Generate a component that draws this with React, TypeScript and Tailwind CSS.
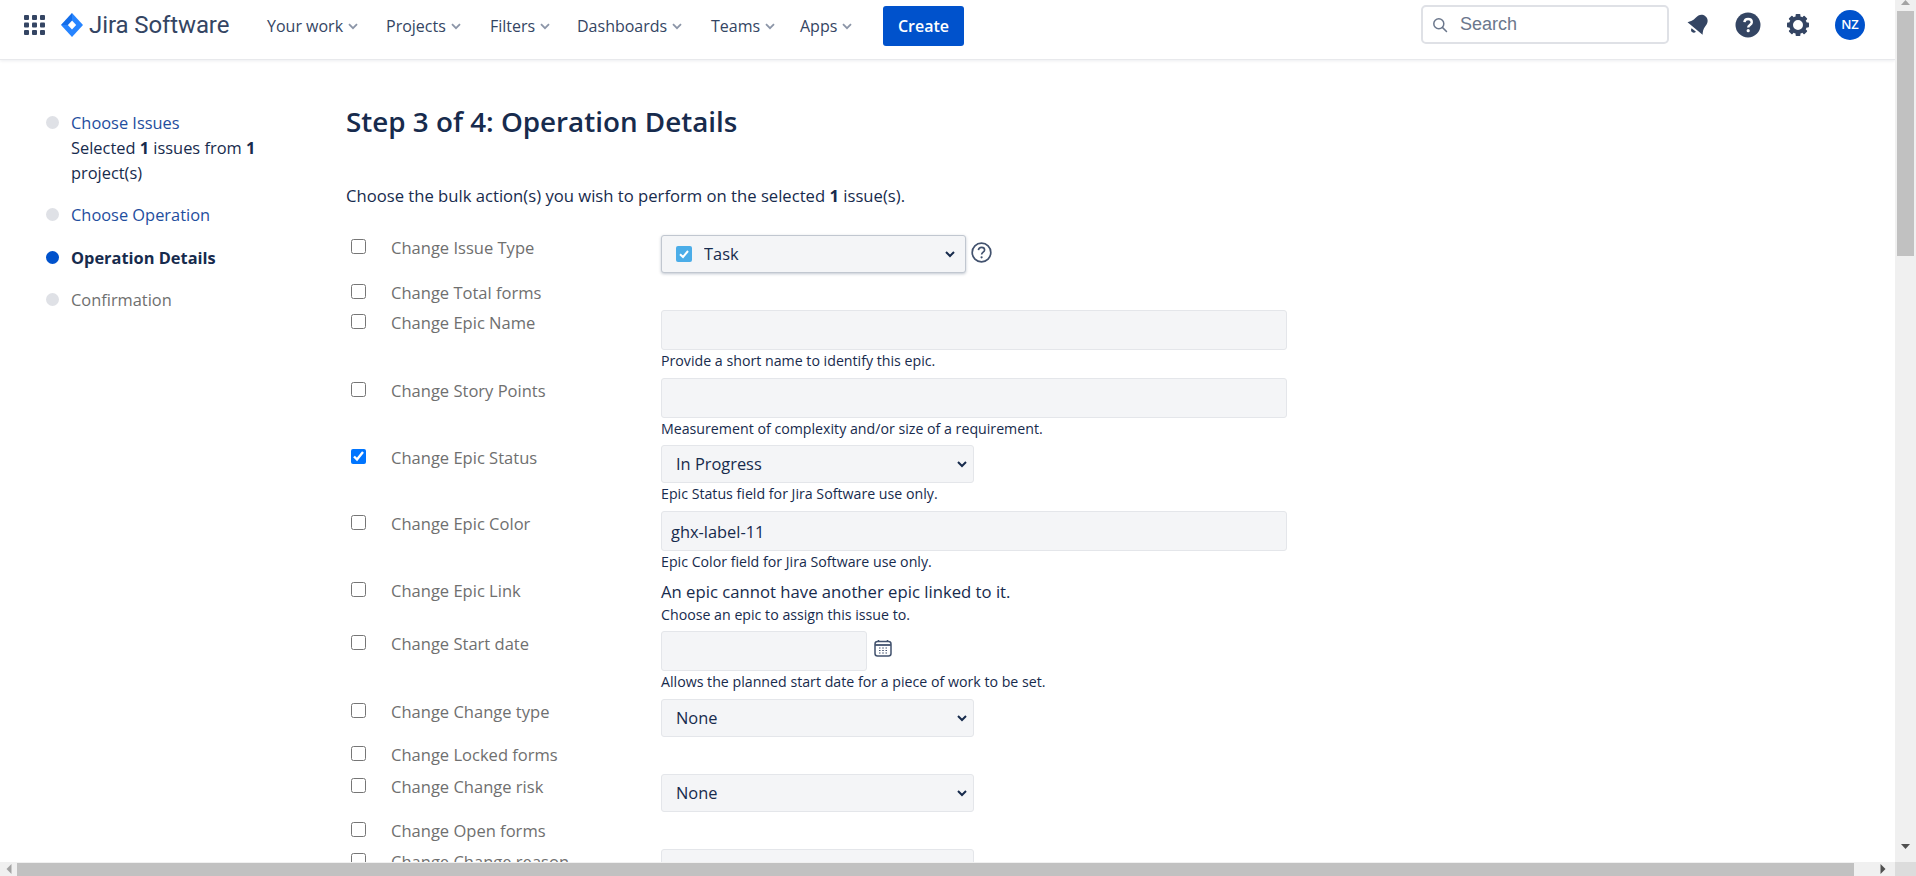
import React from "react";

const navItems = [
  { label: "Your work", cls: "w-[119px]" },
  { label: "Projects", cls: "w-[104px]" },
  { label: "Filters", cls: "w-[87px]" },
  { label: "Dashboards", cls: "w-[134px]" },
  { label: "Teams", cls: "w-[89px]" },
  { label: "Apps", cls: "w-[83px]" },
];

function Chevron() {
  return (
    <svg width="10" height="7" viewBox="0 0 10 7" className="ml-[5px] mt-[1px]">
      <path d="M1 1.2 L5 5.2 L9 1.2" fill="none" stroke="#8c96a8" strokeWidth="1.8" />
    </svg>
  );
}

function SelectArrow({ pos }: { pos: string }) {
  return (
    <svg width="10" height="7" viewBox="0 0 10 7" className={`pointer-events-none absolute top-[16px] ${pos}`}>
      <path d="M1 1 L5 5 L9 1" fill="none" stroke="#172b4d" strokeWidth="2" />
    </svg>
  );
}

function Gear() {
  const teeth = [0, 45, 90, 135, 180, 225, 270, 315];
  return (
    <svg width="24" height="24" viewBox="0 0 24 24">
      <circle cx="12" cy="12" r="7" fill="none" stroke="#344563" strokeWidth="4" />
      {teeth.map((t) => (
        <rect key={t} x="9.6" y="1" width="4.8" height="4.5" rx="0.8" fill="#344563" transform={`rotate(${t} 12 12)`} />
      ))}
    </svg>
  );
}

function Row({ h, label, checked, children }: { h: string; label: string; checked?: boolean; children?: React.ReactNode }) {
  return (
    <div className={`grid grid-cols-[45px_270px_1fr] ${h}`}>
      <div className="pt-1 pl-[5px]">
        <input type="checkbox" defaultChecked={checked} className="block w-[15px] h-[15px] m-0" />
      </div>
      <div className="text-[16.55px] leading-[26px] text-[#6f6f6f]">{label}</div>
      <div>{children}</div>
    </div>
  );
}

function Desc({ children }: { children: React.ReactNode }) {
  return <div className="text-[14.2px] leading-[20px] text-[#172b4d] mt-[1px]">{children}</div>;
}

function Input({ w, value }: { w: string; value?: string }) {
  return (
    <input
      readOnly
      value={value ?? ""}
      className={`${w} block h-[40px] rounded-[3px] border border-[#e4e6ea] bg-[#f4f5f7] px-[9px] text-[16.4px] text-[#172b4d] outline-none`}
    />
  );
}

function Sel({ options }: { options: string }) {
  return (
    <div className="relative w-[313px]">
      <select className="block w-[313px] h-[38px] appearance-none rounded-[3px] border border-[#e4e6ea] bg-[#f4f5f7] pl-[14px] pr-[24px] text-[16.4px] text-[#172b4d]">
        <option>{options}</option>
      </select>
      <SelectArrow pos="right-[7px]" />
    </div>
  );
}

function StepDot({ color }: { color: string }) {
  return <span className={`mt-[6px] h-[13px] w-[13px] shrink-0 rounded-full ${color}`} />;
}

export default function App() {
  return (
    <div className="flex h-[876px] w-[1916px] flex-col overflow-hidden bg-white font-['Open_Sans','Liberation_Sans',sans-serif]">
      <div className="flex min-h-0 flex-1">
        <div className="min-w-0 flex-1 overflow-hidden">
          <header className="flex h-[60px] items-center border-b border-[#e8e9ec] pl-[24px] pr-[30px] shadow-[0_1px_3px_rgba(9,30,66,0.08)]">
            <svg width="21" height="20" viewBox="0 0 21 20" className="mt-[-9px] mr-[16px] shrink-0">
              {[0, 8, 16].flatMap((x) =>
                [0, 7.5, 15].map((y) => <rect key={`${x}-${y}`} x={x} y={y} width="5" height="5" rx="1" fill="#344563" />)
              )}
            </svg>
            <div className="mt-[-10px] flex w-[206px] shrink-0 items-center">
              <svg width="22" height="24" viewBox="0 0 22 24" className="mr-[6px]">
                <path d="M11 0 L22 12 L11 24 L0 12 Z" fill="#2684ff" />
                <path d="M11 7.5 L15.2 12 L11 16.5 L6.8 12 Z" fill="#fff" />
                <path d="M11 0 L11 7.5 L6.8 12 L0 12 Z" fill="#0052cc" opacity="0.45" />
              </svg>
              <span className="font-['Roboto',sans-serif] text-[24px] leading-[28px] tracking-[-0.1px] text-[#344563]">Jira Software</span>
            </div>
            <nav className="mt-[-8px] flex items-center">
              {navItems.map((n) => (
                <div key={n.label} className={`flex items-center text-[16px] font-medium text-[#344563] ${n.cls}`}>
                  {n.label}
                  <Chevron />
                </div>
              ))}
              <button className="h-[40px] w-[81px] rounded-[3px] bg-[#0052cc] text-[16px] font-semibold text-white">Create</button>
            </nav>
            <div className="ml-auto mt-[-10px] flex items-center">
              <div className="flex h-[39px] w-[248px] items-center rounded-[5px] border-2 border-[#dfe1e6] pl-[9px]">
                <svg width="16" height="16" viewBox="0 0 16 16" className="mr-[12px]">
                  <circle cx="6.8" cy="6.8" r="5" fill="none" stroke="#6b778c" strokeWidth="1.5" />
                  <path d="M10.6 10.6 L14.5 14.5" stroke="#6b778c" strokeWidth="1.5" strokeLinecap="round" />
                </svg>
                <span className="font-['Liberation_Sans',sans-serif] text-[18px] text-[#6b778c]">Search</span>
              </div>
              <svg width="24" height="24" viewBox="0 0 22 22" className="ml-[17px]">
                <g transform="rotate(40 11 11)" fill="#344563">
                  <path d="M11 0.5 C7 0.5 5.2 3.6 5.2 7 C5.2 11 3.6 13 2 15.2 L20 15.2 C18.4 13 16.8 11 16.8 7 C16.8 3.6 15 0.5 11 0.5 Z" />
                  <path d="M8.4 17 H13.6 C13.4 18.6 12.3 19.5 11 19.5 C9.7 19.5 8.6 18.6 8.4 17 Z" />
                </g>
              </svg>
              <svg width="26" height="26" viewBox="0 0 26 26" className="ml-[25px]">
                <circle cx="13" cy="13" r="12.5" fill="#344563" />
                <path d="M9.4 10.2 C9.6 8.2 11 7 13.1 7 C15.3 7 16.8 8.3 16.8 10.2 C16.8 12.9 13.2 12.9 13.2 15.4" fill="none" stroke="#fff" strokeWidth="2.4" />
                <circle cx="13.2" cy="18.7" r="1.6" fill="#fff" />
              </svg>
              <div className="ml-[25px]"><Gear /></div>
              <div className="ml-[25px] flex h-[30px] w-[30px] items-center justify-center rounded-full bg-[#0052cc] text-[13px] font-semibold text-white">NZ</div>
            </div>
          </header>

          <div className="flex">
            <aside className="w-[346px] shrink-0 pl-[46px] pt-[50px] text-[16.4px] leading-[25px]">
              <div className="flex gap-[12px]">
                <StepDot color="bg-[#dfe1e6]" />
                <div className="w-[200px] text-[#172b4d]">
                  <div className="text-[#1f4e9e]">Choose Issues</div>
                  Selected <b>1</b> issues from <b>1</b> project(s)
                </div>
              </div>
              <div className="mt-[17px] flex gap-[12px]">
                <StepDot color="bg-[#dfe1e6]" />
                <div className="text-[#1f4e9e]">Choose Operation</div>
              </div>
              <div className="mt-[18px] flex gap-[12px]">
                <StepDot color="bg-[#0052cc]" />
                <div className="font-bold text-[#172b4d]">Operation Details</div>
              </div>
              <div className="mt-[17px] flex gap-[12px]">
                <StepDot color="bg-[#dfe1e6]" />
                <div className="text-[#6f6f6f]">Confirmation</div>
              </div>
            </aside>

            <main className="min-w-0 flex-1">
              <h1 className="mt-[42px] text-[27.8px] font-semibold leading-[38px] text-[#172b4d]">Step 3 of 4: Operation Details</h1>
              <p className="mt-[43px] h-[52px] text-[16.65px] leading-[26px] text-[#172b4d]">
                Choose the bulk action(s) you wish to perform on the selected <b>1</b> issue(s).
              </p>

              <Row h="h-[45px]" label="Change Issue Type">
                <div className="flex">
                  <div className="relative">
                    <select className="block h-[38px] w-[305px] appearance-none rounded-[3px] border border-[#c1c7d0] bg-[#f4f5f7] pl-[42px] pr-[24px] text-[16.4px] text-[#172b4d] shadow-[0_1px_3px_rgba(9,30,66,0.25)]">
                      <option>Task</option>
                    </select>
                    <svg width="16" height="16" viewBox="0 0 16 16" className="absolute left-[15px] top-[11px]">
                      <rect width="16" height="16" rx="2" fill="#4bade8" />
                      <path d="M4 8.2 L7 11 L12 5" fill="none" stroke="#fff" strokeWidth="2" />
                    </svg>
                    <SelectArrow pos="right-[11px]" />
                  </div>
                  <svg width="21" height="21" viewBox="0 0 21 21" className="ml-[5px] mt-[7px]">
                    <circle cx="10.5" cy="10.5" r="9.3" fill="none" stroke="#42526e" strokeWidth="1.7" />
                    <path d="M7.4 8.2 C7.6 6.4 8.8 5.4 10.6 5.4 C12.4 5.4 13.6 6.5 13.6 8 C13.6 10.2 10.6 10.2 10.6 12.6" fill="none" stroke="#42526e" strokeWidth="1.6" />
                    <circle cx="10.6" cy="15.3" r="1.1" fill="#42526e" />
                  </svg>
                </div>
              </Row>
              <Row h="h-[30px]" label="Change Total forms" />
              <Row h="h-[68px]" label="Change Epic Name">
                <Input w="w-[626px]" />
                <Desc>Provide a short name to identify this epic.</Desc>
              </Row>
              <Row h="h-[67px]" label="Change Story Points">
                <Input w="w-[626px]" />
                <Desc>Measurement of complexity and/or size of a requirement.</Desc>
              </Row>
              <Row h="h-[66px]" label="Change Epic Status" checked>
                <Sel options="In Progress" />
                <Desc>Epic Status field for Jira Software use only.</Desc>
              </Row>
              <Row h="h-[67px]" label="Change Epic Color">
                <Input w="w-[626px]" value="ghx-label-11" />
                <Desc>Epic Color field for Jira Software use only.</Desc>
              </Row>
              <Row h="h-[53px]" label="Change Epic Link">
                <div className="text-[16.7px] leading-[28px] text-[#172b4d]">An epic cannot have another epic linked to it.</div>
                <div className="text-[14.2px] leading-[20px] text-[#172b4d] mt-[-1px]">Choose an epic to assign this issue to.</div>
              </Row>
              <Row h="h-[68px]" label="Change Start date">
                <div className="flex">
                  <Input w="w-[206px]" />
                  <svg width="18" height="18" viewBox="0 0 18 18" className="ml-[7px] mt-[8px]">
                    <rect x="1" y="2.5" width="16" height="14.5" rx="2.5" fill="none" stroke="#42526e" strokeWidth="1.5" />
                    <path d="M1 6 H17" stroke="#42526e" strokeWidth="1.8" />
                    <path d="M4.5 1 V3 M13.5 1 V3" stroke="#42526e" strokeWidth="1.5" />
                    <path d="M5 9 H6.5 M8.2 9 H9.8 M11.5 9 H13 M5 11.5 H6.5 M8.2 11.5 H9.8 M11.5 11.5 H13 M5 14 H6.5 M8.2 14 H9.8 M11.5 14 H13" stroke="#42526e" strokeWidth="1.2" />
                  </svg>
                </div>
                <Desc>Allows the planned start date for a piece of work to be set.</Desc>
              </Row>
              <Row h="h-[43px]" label="Change Change type">
                <Sel options="None" />
              </Row>
              <Row h="h-[32px]" label="Change Locked forms" />
              <Row h="h-[44px]" label="Change Change risk">
                <Sel options="None" />
              </Row>
              <Row h="h-[31px]" label="Change Open forms" />
              <Row h="h-[68px]" label="Change Change reason">
                <Input w="w-[313px]" />
              </Row>
            </main>
          </div>
        </div>

        <div className="flex w-[21px] shrink-0 flex-col items-center bg-[#f0f0f0]">
          <svg width="11" height="11" viewBox="0 0 11 11" className="shrink-0">
            <path d="M5.5 0 L10 5 H1 Z" fill="#a3a3a3" />
          </svg>
          <div className="h-[245px] w-[17px] shrink-0 bg-[#c1c1c1]" />
          <div className="flex-1" />
          <svg width="11" height="18" viewBox="0 0 11 18" className="mb-[6px] shrink-0">
            <path d="M1 6 H10 L5.5 11 Z" fill="#505050" />
          </svg>
        </div>
      </div>

      <div className="flex h-[14px] shrink-0 bg-[#f0f0f0]">
        <div className="flex w-[17px] shrink-0 items-center justify-center">
          <svg width="6" height="10" viewBox="0 0 6 10"><path d="M5.5 0 V10 L0.5 5 Z" fill="#a3a3a3" /></svg>
        </div>
        <div className="mt-[1px] w-[1837px] shrink-0 bg-[#c1c1c1]" />
        <div className="flex w-[41px] shrink-0 items-center justify-end pr-[9px]">
          <svg width="6" height="10" viewBox="0 0 6 10"><path d="M0.5 0 V10 L5.5 5 Z" fill="#505050" /></svg>
        </div>
        <div className="w-[21px] shrink-0 bg-[#dcdcdc]" />
      </div>
    </div>
  );
}
